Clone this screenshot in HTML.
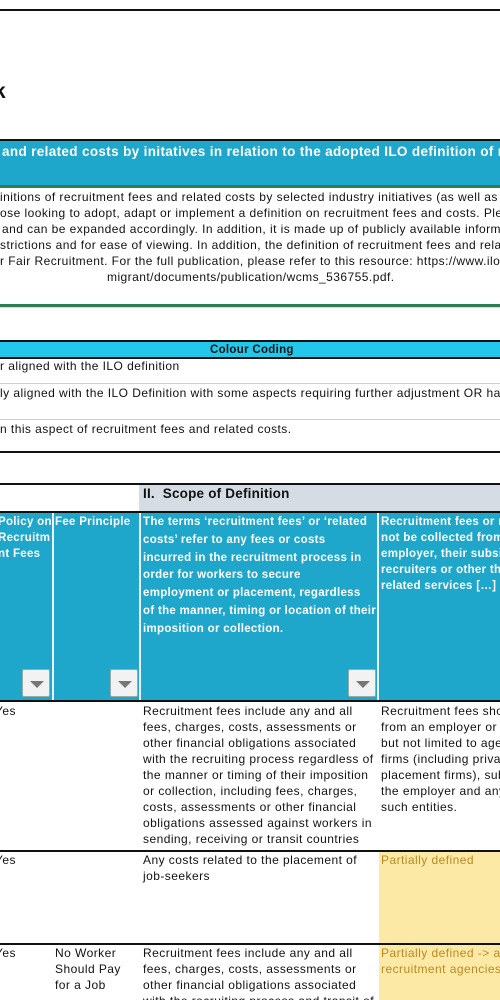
<!DOCTYPE html>
<html><head><meta charset="utf-8"><style>
*{margin:0;padding:0;box-sizing:border-box}
html{overflow:hidden;width:500px;height:1000px}
body{width:500px;height:1000px;overflow:hidden;background:#fff;position:relative;font-family:"Liberation Sans",Arial,sans-serif;color:#111}
.a{position:absolute}
.t{position:absolute;white-space:nowrap;font-size:12px;letter-spacing:0.45px;line-height:16px}
.hb{color:#fff;font-weight:bold;font-size:11.5px;letter-spacing:0.3px;white-space:nowrap;position:absolute}
.dd{position:absolute;width:28px;height:28px;background:#f2f2f2;border:1px solid #9aa;border-radius:2px}
.dd:after{content:"";position:absolute;left:7px;top:11px;border-left:7px solid transparent;border-right:7px solid transparent;border-top:7px solid #777}
</style></head><body>
<div class="a" style="left:0;top:9px;width:500px;height:2px;background:#111"></div>
<div class="a" style="left:-6px;top:80px;font-size:21px;font-weight:bold">k</div>

<div class="a" style="left:0;top:139px;width:500px;height:2px;background:#111"></div>
<div class="a" style="left:0;top:141px;width:500px;height:44px;background:#1fa6cb"></div>
<div class="a" style="left:2px;top:144px;font-size:13.5px;letter-spacing:0.35px;font-weight:bold;color:#fff;white-space:nowrap">and related costs by initatives in relation to the adopted ILO definition of recruitment</div>
<div class="a" style="left:0;top:185px;width:500px;height:3px;background:#2e7d4f"></div>
<div class="t" style="left:0;top:189px">initions of recruitment fees and related costs by selected industry initiatives (as well as</div>
<div class="t" style="left:0;top:205px">ose looking to adopt, adapt or implement a definition on recruitment fees and costs. Ple</div>
<div class="t" style="left:2px;top:221px">and can be expanded accordingly. In addition, it is made up of publicly available inform</div>
<div class="t" style="left:0;top:237px">strictions and for ease of viewing. In addition, the definition of recruitment fees and relat</div>
<div class="t" style="left:0;top:253px">r Fair Recruitment. For the full publication, please refer to this resource: https://www.ilo.o</div>
<div class="t" style="left:107px;top:269px">migrant/documents/publication/wcms_536755.pdf.</div>
<div class="a" style="left:0;top:304px;width:500px;height:3px;background:#2e7d4f"></div>
<div class="a" style="left:0;top:307px;width:500px;height:1px;background:#cfe0d5"></div>

<div class="a" style="left:0;top:340px;width:500px;height:2px;background:#111"></div>
<div class="a" style="left:0;top:342px;width:500px;height:15px;background:#22c7ea"></div>
<div class="a" style="left:210px;top:342px;font-size:11.5px;letter-spacing:0.3px;font-weight:bold;line-height:16px">Colour Coding</div>
<div class="a" style="left:0;top:357px;width:500px;height:2px;background:#111"></div>
<div class="t" style="left:0;top:358px">r aligned with the ILO definition</div>
<div class="a" style="left:0;top:383px;width:500px;height:1px;background:#ccc"></div>
<div class="t" style="left:0;top:385px">ly aligned with the ILO Definition with some aspects requiring further adjustment OR has</div>
<div class="a" style="left:0;top:419px;width:500px;height:1px;background:#ccc"></div>
<div class="t" style="left:0;top:421px">n this aspect of recruitment fees and related costs.</div>
<div class="a" style="left:0;top:451px;width:500px;height:2px;background:#111"></div>

<div class="a" style="left:0;top:483px;width:500px;height:2px;background:#111"></div>
<div class="a" style="left:139px;top:485px;width:361px;height:27px;background:#d6dce4"></div>
<div class="a" style="left:143px;top:486px;font-size:13.5px;letter-spacing:0.2px;font-weight:bold;line-height:16px">II.&nbsp; Scope of Definition</div>
<div class="a" style="left:0;top:511px;width:500px;height:2px;background:#111"></div>
<div class="a" style="left:0;top:513px;width:500px;height:187px;background:#1fa6cb"></div>
<div class="a" style="left:52px;top:513px;width:2px;height:187px;background:#e8f4f8"></div>
<div class="a" style="left:139px;top:513px;width:2px;height:187px;background:#e8f4f8"></div>
<div class="a" style="left:377px;top:513px;width:2px;height:187px;background:#e8f4f8"></div>
<div class="a" style="left:0;top:513px;width:52px;height:187px;overflow:hidden"><div class="hb" style="left:-2px;top:1px;line-height:16px">Policy on<br>Recruitm<br>nt Fees</div></div>
<div class="hb" style="left:55px;top:514px;line-height:16px">Fee Principle</div>
<div class="hb" style="left:143px;top:514px;line-height:17.8px">The terms ‘recruitment fees’ or ‘related<br>costs’ refer to any fees or costs<br>incurred in the recruitment process in<br>order for workers to secure<br>employment or placement, regardless<br>of the manner, timing or location of their<br>imposition or collection.</div>
<div class="hb" style="left:381px;top:514px;line-height:16px">Recruitment fees or related costs should<br>not be collected from workers by an<br>employer, their subsidiaries, labour<br>recruiters or other third parties providing<br>related services […]</div>
<div class="dd" style="left:22px;top:669px"></div>
<div class="dd" style="left:110px;top:669px"></div>
<div class="dd" style="left:348px;top:669px"></div>
<div class="a" style="left:0;top:700px;width:500px;height:2px;background:#111"></div>

<div class="t" style="left:-5px;top:703px">Yes</div>
<div class="t" style="left:143px;top:703px">Recruitment fees include any and all<br>fees, charges, costs, assessments or<br>other financial obligations associated<br>with the recruiting process regardless of<br>the manner or timing of their imposition<br>or collection, including fees, charges,<br>costs, assessments or other financial<br>obligations assessed against workers in<br>sending, receiving or transit countries</div>
<div class="t" style="left:381px;top:703px">Recruitment fees should not be charged<br>from an employer or any entity including<br>but not limited to agents and recruitment<br>firms (including private employment and<br>placement firms), subcontracted by<br>the employer and any agents of<br>such entities.</div>
<div class="a" style="left:0;top:850px;width:500px;height:2px;background:#111"></div>
<div class="a" style="left:379px;top:852px;width:121px;height:148px;background:#fde9a6"></div>
<div class="t" style="left:-5px;top:852px">Yes</div>
<div class="t" style="left:143px;top:852px">Any costs related to the placement of<br>job-seekers</div>
<div class="t" style="left:381px;top:852px;color:#b98a22">Partially defined</div>
<div class="a" style="left:0;top:943px;width:500px;height:2px;background:#111"></div>
<div class="t" style="left:-5px;top:945px">Yes</div>
<div class="t" style="left:55px;top:945px">No Worker<br>Should Pay<br>for a Job</div>
<div class="t" style="left:143px;top:945px">Recruitment fees include any and all<br>fees, charges, costs, assessments or<br>other financial obligations associated<br>with the recruiting process and transit of</div>
<div class="t" style="left:381px;top:945px;color:#b98a22">Partially defined -&gt; applies to<br>recruitment agencies</div>
</body></html>
